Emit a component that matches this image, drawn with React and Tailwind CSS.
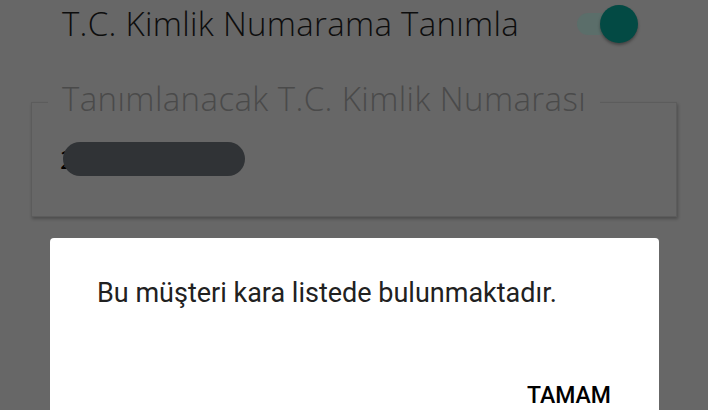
import React from 'react';

function Toggle({ on }) {
  return (
    <div className="relative w-[64px] h-[40px] flex items-center">
      <div className={`ml-[1px] h-[22px] w-[50px] rounded-full ${on ? 'bg-[#5b6e6a]' : 'bg-[#5a5a5a]'}`} />
      <div
        className={`absolute top-[1px] h-[38px] w-[38px] rounded-full shadow-[0_2px_3px_rgba(0,0,0,0.35)] ${
          on ? 'left-[24px] bg-[#034a44]' : 'left-0 bg-[#888]'
        }`}
      />
    </div>
  );
}

const thin = { fontFamily: '"Open Sans", Lato, sans-serif' };

export default function App() {
  return (
    <div className="w-[708px] h-[410px] overflow-hidden bg-[#676767]">
      <div className="flex items-center justify-between pl-[62px] pr-[68px] pt-[3px] h-[44px]">
        <span className="text-[33px] font-light tracking-[0.3px] text-[#0d0d0d] leading-none" style={thin}>
          T.C. Kimlik Numarama Tanımla
        </span>
        <Toggle on />
      </div>

      <div className="mx-[31px] mt-[58px] relative">
        <div className="h-[115px] border border-[#5c5c5c] shadow-[1px_2px_3px_rgba(0,0,0,0.25)] px-[28px] pt-[39px]">
          <div className="relative flex items-center h-[34px]">
            <span className="text-[26px] text-black leading-none" style={thin}>2</span>
            <div className="absolute left-[3px] top-0 h-[34px] w-[182px] rounded-full bg-[#303336]" />
          </div>
        </div>
        <span
          className="absolute -top-[20px] left-[17px] px-[14px] bg-[#676767] text-[33px] font-light tracking-[0.4px] text-[#4a4a4a] leading-none"
          style={thin}
        >
          Tanımlanacak T.C. Kimlik Numarası
        </span>
      </div>

      <div className="mx-[50px] mt-[21px] w-[609px] bg-white rounded-[4px] pt-[42px] pl-[47px] pr-[48px] h-[200px]" style={{ fontFamily: 'Roboto, sans-serif' }}>
        <p className="text-[27px] text-[#212121] leading-none">Bu müşteri kara listede bulunmaktadır.</p>
        <div className="flex justify-end mt-[77px]">
          <button className="text-[23px] font-medium text-black leading-none">TAMAM</button>
        </div>
      </div>
    </div>
  );
}
